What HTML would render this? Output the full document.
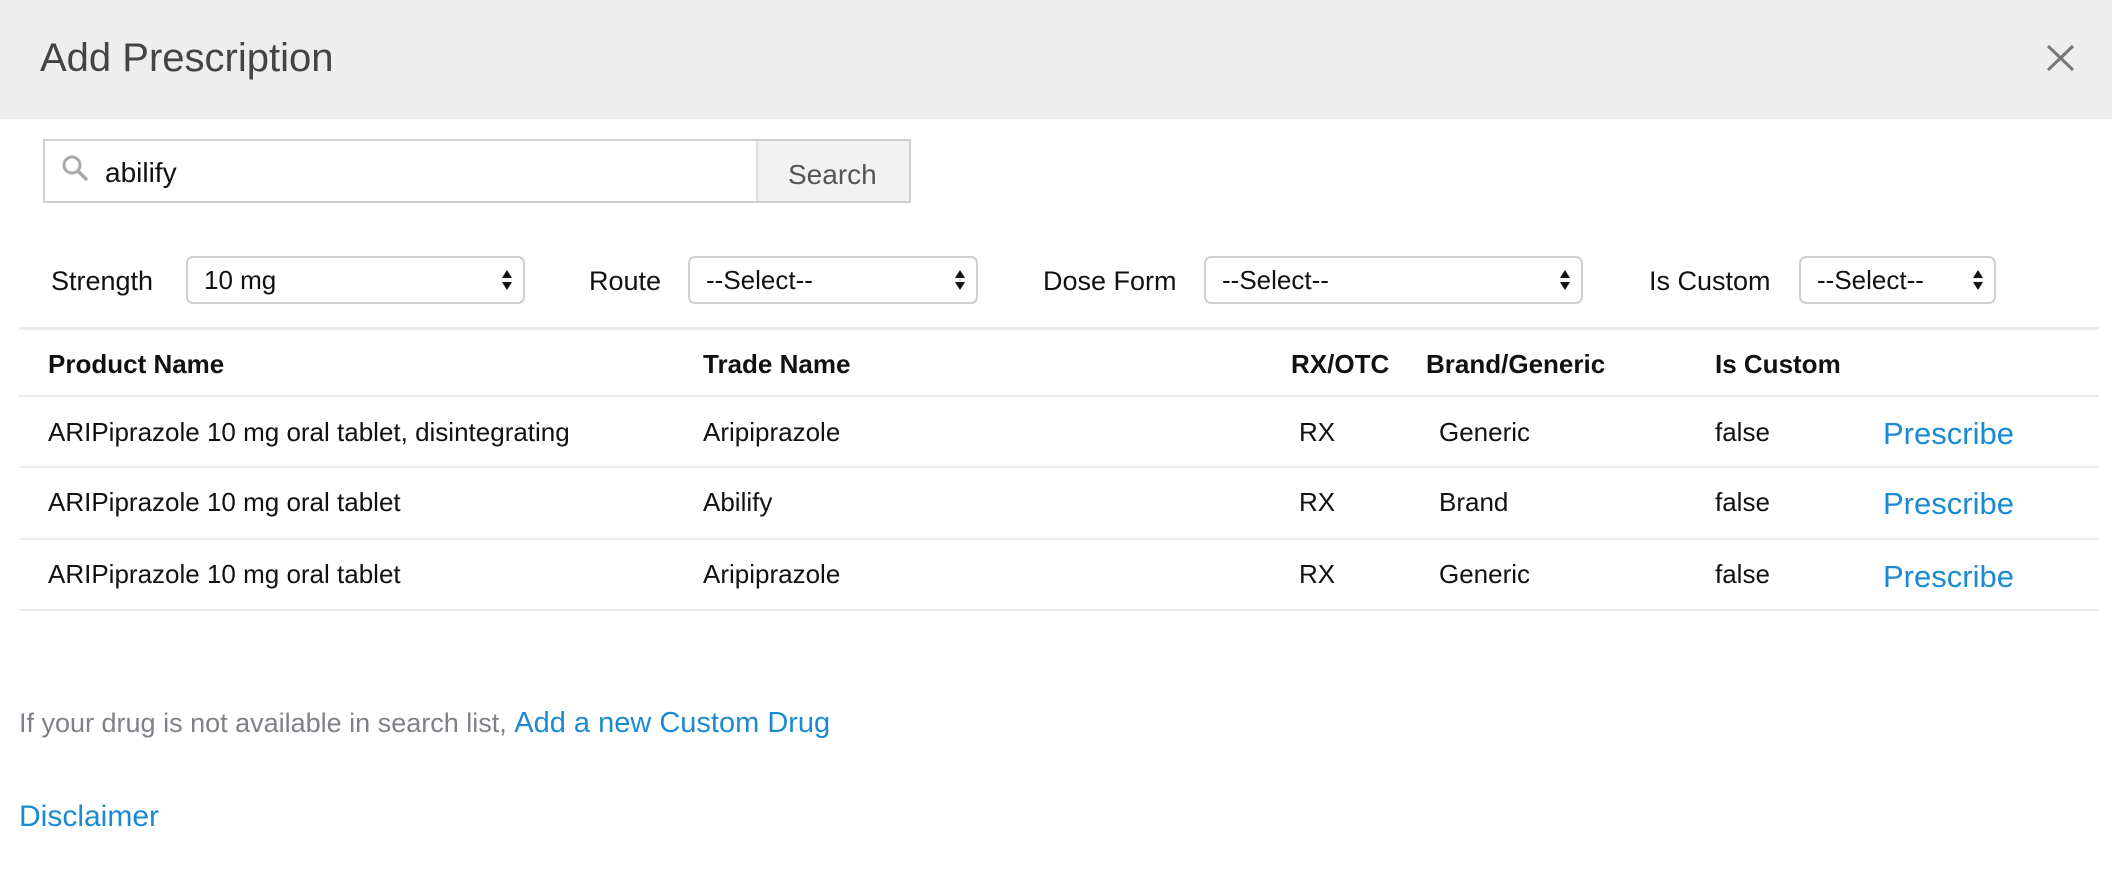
<!DOCTYPE html>
<html><head><meta charset="utf-8"><style>
*{margin:0;padding:0;box-sizing:border-box}
body{width:2112px;height:879px;background:#fff;font-family:"Liberation Sans",sans-serif;color:#111;position:relative;overflow:hidden}
.a{position:absolute;white-space:nowrap;line-height:1}
.hdr{position:absolute;left:0;top:0;width:2112px;height:119px;background:#eeeeee}
.sel{position:absolute;top:256px;height:48px;border:2px solid #cfcfcf;border-radius:7px;background:#fff;font-size:26px;padding-left:16px;line-height:44px}
.arr{position:absolute;right:10px;top:10px;width:12px;height:24px}
.line{position:absolute;left:19px;width:2080px;height:2px;background:#ebebeb}
.b{font-weight:bold}
.t{font-size:26px}
.l{font-size:27px}
.blue{color:#1b8ad3}
</style></head><body>
<div class="hdr"></div>
<div class="a" style="left:40px;top:38px;font-size:40px;color:#444;font-weight:300">Add Prescription</div>
<svg class="a" style="left:2046px;top:44px" width="29" height="28" viewBox="0 0 29 28"><path d="M2 2L27 26M27 2L2 26" stroke="#777" stroke-width="3"/></svg>

<div style="position:absolute;left:43px;top:139px;width:868px;height:64px;border:2px solid #cfcfcf;background:#fff"></div>
<div style="position:absolute;left:756px;top:141px;width:153px;height:60px;background:#f2f2f2;border-left:2px solid #e0e0e0"></div>
<div class="a" style="left:788px;top:161px;font-size:28px;color:#555">Search</div>
<svg class="a" style="left:60px;top:153px" width="30" height="30" viewBox="0 0 30 30"><circle cx="12" cy="12" r="8" fill="none" stroke="#aaa" stroke-width="3"/><path d="M18 18L26 26" stroke="#aaa" stroke-width="3.5" stroke-linecap="round"/></svg>
<div class="a" style="left:105px;top:159px;font-size:28px">abilify</div>

<div class="a l" style="left:51px;top:268px">Strength</div>
<div class="sel" style="left:186px;width:339px">10 mg<svg class="arr" viewBox="0 0 12 24"><path d="M6 2L11 10H1Z M6 22L11 14H1Z" fill="#111"/></svg></div>
<div class="a l" style="left:589px;top:268px">Route</div>
<div class="sel" style="left:688px;width:290px">--Select--<svg class="arr" viewBox="0 0 12 24"><path d="M6 2L11 10H1Z M6 22L11 14H1Z" fill="#111"/></svg></div>
<div class="a l" style="left:1043px;top:268px">Dose Form</div>
<div class="sel" style="left:1204px;width:379px">--Select--<svg class="arr" viewBox="0 0 12 24"><path d="M6 2L11 10H1Z M6 22L11 14H1Z" fill="#111"/></svg></div>
<div class="a l" style="left:1649px;top:268px">Is Custom</div>
<div class="sel" style="left:1799px;width:197px">--Select--<svg class="arr" viewBox="0 0 12 24"><path d="M6 2L11 10H1Z M6 22L11 14H1Z" fill="#111"/></svg></div>

<div class="line" style="top:327px;height:3px"></div>
<div class="line" style="top:395px"></div>
<div class="line" style="top:466px"></div>
<div class="line" style="top:538px"></div>
<div class="line" style="top:609px"></div>

<div class="a t b" style="left:48px;top:351px">Product Name</div>
<div class="a t b" style="left:703px;top:351px">Trade Name</div>
<div class="a t b" style="left:1291px;top:351px">RX/OTC</div>
<div class="a t b" style="left:1426px;top:351px">Brand/Generic</div>
<div class="a t b" style="left:1715px;top:351px">Is Custom</div>

<div class="a t" style="left:48px;top:419px">ARIPiprazole 10 mg oral tablet, disintegrating</div>
<div class="a t" style="left:703px;top:419px">Aripiprazole</div>
<div class="a t" style="left:1299px;top:419px">RX</div>
<div class="a t" style="left:1439px;top:419px">Generic</div>
<div class="a t" style="left:1715px;top:419px">false</div>
<div class="a blue" style="left:1883px;top:418px;font-size:31px">Prescribe</div>

<div class="a t" style="left:48px;top:489px">ARIPiprazole 10 mg oral tablet</div>
<div class="a t" style="left:703px;top:489px">Abilify</div>
<div class="a t" style="left:1299px;top:489px">RX</div>
<div class="a t" style="left:1439px;top:489px">Brand</div>
<div class="a t" style="left:1715px;top:489px">false</div>
<div class="a blue" style="left:1883px;top:488px;font-size:31px">Prescribe</div>

<div class="a t" style="left:48px;top:561px">ARIPiprazole 10 mg oral tablet</div>
<div class="a t" style="left:703px;top:561px">Aripiprazole</div>
<div class="a t" style="left:1299px;top:561px">RX</div>
<div class="a t" style="left:1439px;top:561px">Generic</div>
<div class="a t" style="left:1715px;top:561px">false</div>
<div class="a blue" style="left:1883px;top:561px;font-size:31px">Prescribe</div>

<div class="a" style="left:19px;top:709px;color:#808088;font-size:27px">If your drug is not available in search list, <span class="blue" style="font-size:29px">Add a new Custom Drug</span></div>
<div class="a blue" style="left:19px;top:802px;font-size:30px">Disclaimer</div>
</body></html>
